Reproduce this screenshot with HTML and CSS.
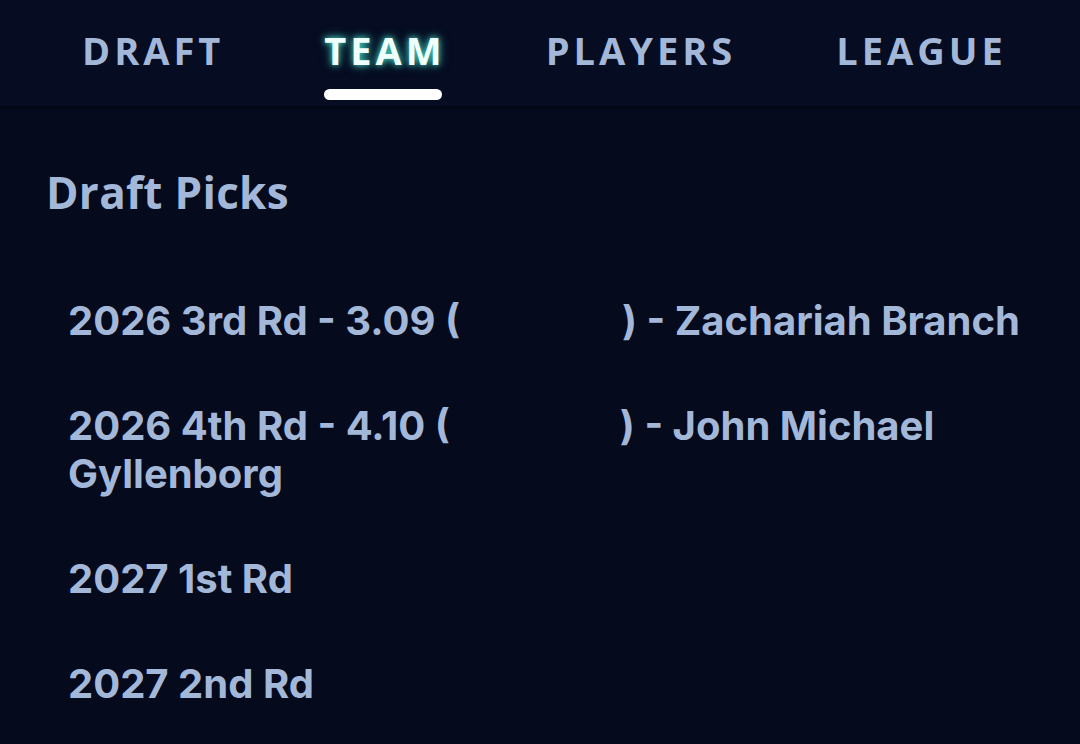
FILE: index.html
```html
<!DOCTYPE html>
<html lang="en">
<head>
<meta charset="utf-8">
<title>Team - Draft Picks</title>
<link rel="stylesheet" href="styles.css">
</head>
<body>
<header class="topbar">
  <nav class="tabs">
    <a class="tab">DRAFT</a>
    <a class="tab active">TEAM</a>
    <a class="tab">PLAYERS</a>
    <a class="tab">LEAGUE</a>
  </nav>
</header>
<main class="content">
  <h2 class="section-title">Draft Picks</h2>
  <ul class="picks">
    <li class="pick">2026 3rd Rd - 3.09 (<span class="redact r1"></span>) - Zachariah Branch</li>
    <li class="pick">2026 4th Rd - 4.10 (<span class="redact r2"></span>) - John Michael Gyllenborg</li>
    <li class="pick">2027 1st Rd</li>
    <li class="pick">2027 2nd Rd</li>
  </ul>
</main>
</body>
</html>
```
FILE: styles.css
```css
* { box-sizing: border-box; }
html, body { margin: 0; padding: 0; }
body {
  width: 1080px;
  height: 744px;
  overflow: hidden;
  background: #050a1c;
  color: #a3b8d8;
  font-family: "Inter", "Liberation Sans", sans-serif;
}
.topbar {
  height: 106px;
  background: #060c21;
  box-shadow: 0 2px 3px rgba(0, 0, 0, 0.35);
}
.tabs {
  display: flex;
  gap: 104px;
  padding-left: 82px;
  padding-top: 30px;
}
.tab {
  position: relative;
  font-family: "Open Sans", "Liberation Sans", sans-serif;
  font-weight: 700;
  font-size: 38px;
  line-height: 40px;
  letter-spacing: 4px;
  color: #a3b8d8;
  margin-right: -4px;
}
.tab.active {
  color: #effffb;
  text-shadow: 0 0 6px rgba(80, 240, 215, 0.9), 0 0 12px rgba(60, 220, 200, 0.5);
}
.tab.active::after {
  content: "";
  position: absolute;
  left: 0;
  right: 4px;
  top: 59px;
  height: 11px;
  border-radius: 6px;
  background: #ffffff;
}
.content {
  padding: 0 40px 0 46px;
}
.section-title {
  margin: 0;
  padding-top: 62px;
  font-family: "Open Sans", "Liberation Sans", sans-serif;
  font-weight: 700;
  font-size: 44px;
  line-height: 48px;
  letter-spacing: 0.3px;
  color: #a3b8d8;
}
.picks {
  list-style: none;
  margin: 0;
  padding: 81px 0 0 22px;
  display: flex;
  flex-direction: column;
  gap: 57px;
}
.pick {
  font-weight: 700;
  font-size: 40px;
  line-height: 48px;
}
.redact {
  display: inline-block;
  height: 30px;
}
.r1 { width: 162px; }
.r2 { width: 170px; }
```
